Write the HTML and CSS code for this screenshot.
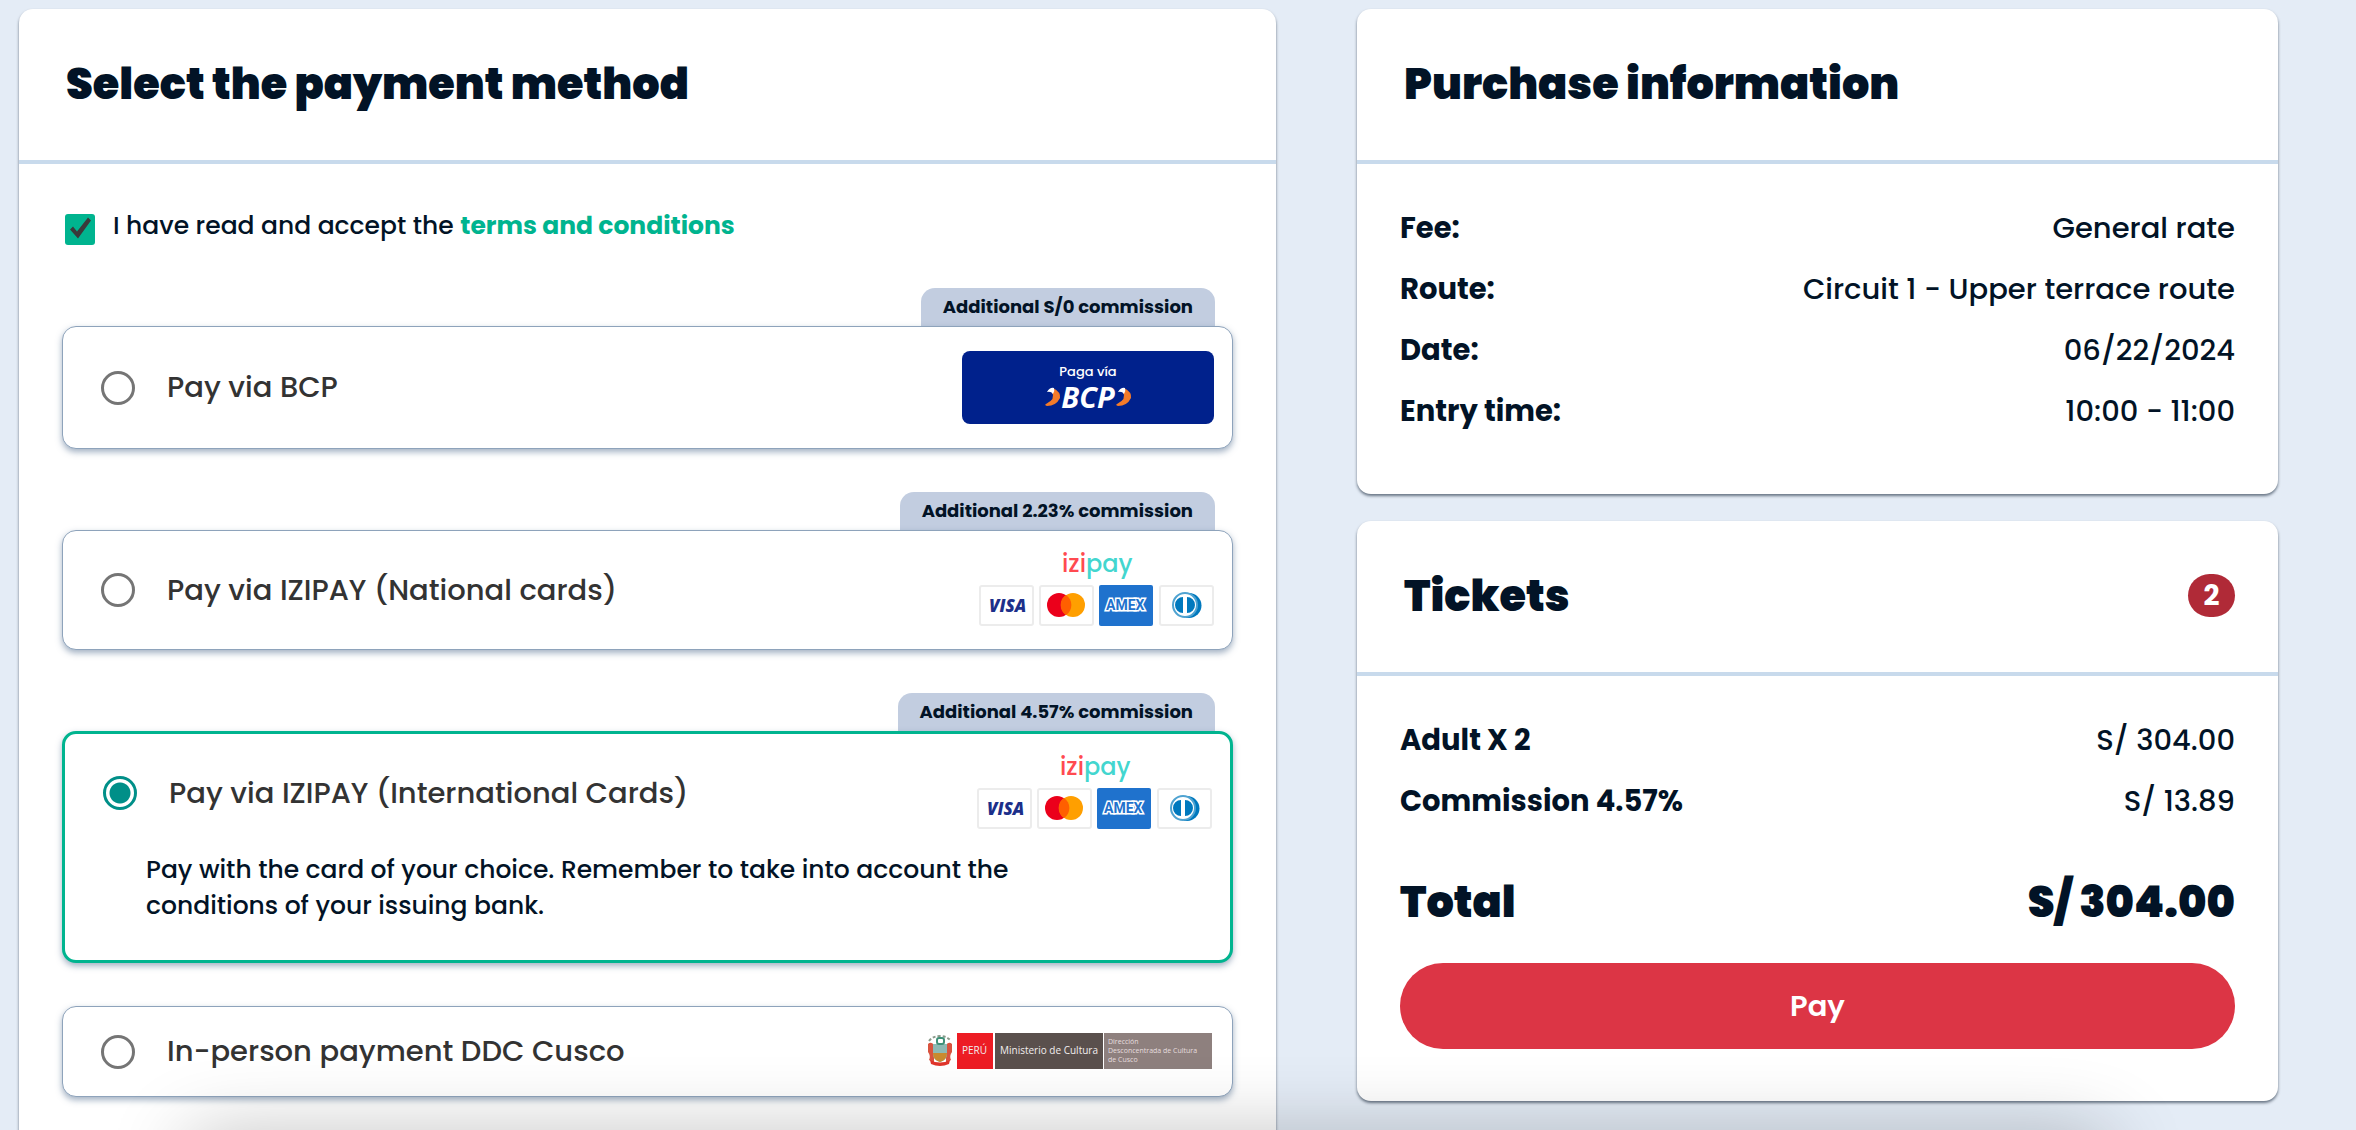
FILE: index.html
```html
<!DOCTYPE html>
<html lang="en">
<head>
    <meta charset="UTF-8">
    <meta name="viewport" content="width=device-width, initial-scale=1.0">
    <title>Payment</title>
    <link rel="stylesheet" href="styles.css">
</head>
<body>
    <main class="checkout">
        <section class="card methods">
            <header class="card-header">
                <h1>Select the payment method</h1>
            </header>
            <form class="card-body">
                <div class="terms">
                    <input type="checkbox" id="terms" checked>
                    <label for="terms">I have read and accept the <a href="#terms">terms and conditions</a></label>
                </div>

                <div class="method">
                    <span class="commission">Additional S/0 commission</span>
                    <div class="option">
                        <div class="option-row bcp">
                            <input type="radio" name="method" id="bcp">
                            <label for="bcp">Pay via BCP</label>
                            <svg class="bcp-logo" width="252" height="73" viewBox="0 0 252 73">
                                <rect width="252" height="73" rx="8" fill="#00218c"/>
                                <text x="126" y="25" class="bcp-via">Paga vía</text>
                                <text x="126" y="57" class="bcp-name">BCP</text>
                                <g id="bcp-mark">
                                    <path d="M91 37q8 4 7 10q-4 8-13 8q-3-1-1-2q10-5 6-12z" fill="#f47b29"/>
                                    <path d="M85 41q3-5 7-4q1 3-1 6q-2-3-6-2z" fill="#fff"/>
                                </g>
                                <use href="#bcp-mark" x="71"/>
                            </svg>
                        </div>
                    </div>
                </div>

                <div class="method">
                    <span class="commission">Additional 2.23% commission</span>
                    <div class="option">
                        <div class="option-row">
                            <input type="radio" name="method" id="izipay-national">
                            <label for="izipay-national">Pay via IZIPAY (National cards)</label>
                            <svg class="brands" width="236" height="76" viewBox="0 0 236 76">
                                <text x="84" y="20" class="izi">izi<tspan class="izi-pay">pay</tspan></text>
                                <g class="brand-box">
                                    <rect x="2" y="34" width="53" height="39" rx="2"/>
                                    <rect x="62" y="34" width="53" height="39" rx="2"/>
                                    <rect x="182" y="34" width="53" height="39" rx="2"/>
                                </g>
                                <text x="11" y="60" class="visa">VISA</text>
                                <circle cx="81" cy="53" r="12" fill="#eb001b"/>
                                <circle cx="95" cy="53" r="12" fill="#ff9f00"/>
                                <path d="M88 43a12 12 0 0 1 0 20a12 12 0 0 1 0-20z" fill="#ff5f00"/>
                                <rect x="121" y="33" width="54" height="41" rx="2" fill="#1f72cd"/>
                                <text x="128" y="58" class="amex">AMEX</text>
                                <path d="M208 41h3a12 12 0 0 1 0 25h-3z" fill="#0079be"/>
                                <circle cx="207" cy="53" r="12" fill="#fff" stroke="#4fa3d1" stroke-width="2"/>
                                <path d="M205 45a8 8 0 0 0 0 16zM209 45a8 8 0 0 1 0 16z" fill="#0079be"/>
                            </svg>
                        </div>
                    </div>
                </div>

                <div class="method">
                    <span class="commission">Additional 4.57% commission</span>
                    <div class="option selected">
                        <div class="option-row">
                            <input type="radio" name="method" id="izipay-international" checked>
                            <label for="izipay-international">Pay via IZIPAY (International Cards)</label>
                            <svg class="brands" width="236" height="76" viewBox="0 0 236 76">
                                <text x="84" y="20" class="izi">izi<tspan class="izi-pay">pay</tspan></text>
                                <g class="brand-box">
                                    <rect x="2" y="34" width="53" height="39" rx="2"/>
                                    <rect x="62" y="34" width="53" height="39" rx="2"/>
                                    <rect x="182" y="34" width="53" height="39" rx="2"/>
                                </g>
                                <text x="11" y="60" class="visa">VISA</text>
                                <circle cx="81" cy="53" r="12" fill="#eb001b"/>
                                <circle cx="95" cy="53" r="12" fill="#ff9f00"/>
                                <path d="M88 43a12 12 0 0 1 0 20a12 12 0 0 1 0-20z" fill="#ff5f00"/>
                                <rect x="121" y="33" width="54" height="41" rx="2" fill="#1f72cd"/>
                                <text x="128" y="58" class="amex">AMEX</text>
                                <path d="M208 41h3a12 12 0 0 1 0 25h-3z" fill="#0079be"/>
                                <circle cx="207" cy="53" r="12" fill="#fff" stroke="#4fa3d1" stroke-width="2"/>
                                <path d="M205 45a8 8 0 0 0 0 16zM209 45a8 8 0 0 1 0 16z" fill="#0079be"/>
                            </svg>
                        </div>
                        <p class="option-info">Pay with the card of your choice. Remember to take into account the conditions of your issuing bank.</p>
                    </div>
                </div>

                <div class="method">
                    <div class="option">
                        <div class="option-row compact">
                            <input type="radio" name="method" id="ddc">
                            <label for="ddc">In-person payment DDC Cusco</label>
                            <svg class="ddc-logo" width="288" height="37" viewBox="0 0 288 37">
                                <path d="M3 8q4-5 11-5t11 5" fill="none" stroke="#8a9a8a" stroke-width="2" stroke-dasharray="3 2"/>
                                <path d="M2 11q3-3 6 1v18l-5-3q2-4-1-8zM26 11q-3-3-6 1v18l5-3q-2-4 1-8z" fill="#d9533f"/>
                                <path d="M7 11h14v10q0 6-7 8q-7-2-7-8z" fill="#8db9b4"/>
                                <path d="M7 20h14q0 7-7 9q-7-2-7-9z" fill="#c98a2e"/>
                                <rect x="11" y="5" width="7" height="6" rx="2" fill="#fff" stroke="#3f9178" stroke-width="2"/>
                                <path d="M4 27q10 5 20 0l-1 4q-9 4-18 0z" fill="#e0352b"/>
                                <rect x="31" y="0" width="36" height="36" fill="#ed1c24"/>
                                <rect x="69" y="0" width="108" height="36" fill="#5a504d"/>
                                <rect x="178" y="0" width="108" height="36" fill="#8e807e"/>
                                <text x="36" y="21" class="ddc-text">PERÚ</text>
                                <text x="74" y="21" class="ddc-text">Ministerio de Cultura</text>
                                <text class="ddc-small"><tspan x="182" y="11">Dirección</tspan><tspan x="182" y="20">Desconcentrada de Cultura</tspan><tspan x="182" y="29">de Cusco</tspan></text>
                            </svg>
                        </div>
                    </div>
                </div>
            </form>
        </section>

        <aside class="summary">
            <section class="card">
                <header class="card-header">
                    <h2>Purchase information</h2>
                </header>
                <dl class="rows info">
                    <div><dt>Fee:</dt><dd>General rate</dd></div>
                    <div><dt>Route:</dt><dd>Circuit 1 - Upper terrace route</dd></div>
                    <div><dt>Date:</dt><dd>06/22/2024</dd></div>
                    <div><dt>Entry time:</dt><dd>10:00 - 11:00</dd></div>
                </dl>
            </section>

            <section class="card">
                <header class="card-header">
                    <h2>Tickets</h2>
                    <span class="count">2</span>
                </header>
                <dl class="rows">
                    <div><dt>Adult X 2</dt><dd>S/ 304.00</dd></div>
                    <div><dt>Commission 4.57%</dt><dd>S/ 13.89</dd></div>
                    <div class="total"><dt>Total</dt><dd>S/ 304.00</dd></div>
                </dl>
                <button type="button" class="pay">Pay</button>
            </section>
        </aside>
    </main>
    <div class="bottom-shade"></div>
</body>
</html>
```

FILE: styles.css
```css
* {
    box-sizing: border-box;
}

html, body {
    height: 100%;
}

body {
    margin: 0;
    overflow: hidden;
    background: #e4ecf6;
    color: #021326;
    font-family: Poppins, Inter, sans-serif;
    font-size: 25px;
    line-height: 36px;
}

h1, h2, p, dl, dd {
    margin: 0;
}

.checkout {
    display: grid;
    grid-template-columns: 1257fr 921fr;
    gap: 81px;
    min-height: 100%;
    padding: 9px 78px 0 19px;
}

.card {
    background: #fff;
    border-radius: 14px;
    box-shadow: 0 2px 3px rgba(2, 19, 38, 0.55);
}

.methods {
    border-radius: 14px 14px 0 0;
}

.card-header {
    display: flex;
    align-items: center;
    justify-content: space-between;
    height: 155px;
    padding: 0 43px 2px 47px;
    border-bottom: 4px solid #c8daec;
}

h1, h2 {
    font-size: 43px;
    font-weight: 900;
    line-height: 60px;
}

/* payment methods */
.card-body {
    padding: 40px 43px 60px;
}

.terms {
    display: flex;
    align-items: center;
    gap: 18px;
    height: 44px;
    padding-left: 3px;
    font-weight: 500;
}

.terms a {
    color: #00b48f;
    font-weight: 700;
    text-decoration: none;
}

.terms input {
    appearance: none;
    width: 30px;
    height: 31px;
    margin: 6px 0 0;
    border-radius: 3px;
    background: #00b48f;
}

.terms input:checked::after {
    content: "";
    display: block;
    width: 30px;
    height: 31px;
    background: #3a3a3a;
    clip-path: polygon(5px 16px, 8px 13px, 12px 18px, 23px 4px, 26px 7px, 13px 25px);
}

.method {
    display: flex;
    flex-direction: column;
    margin-top: 43px;
}

.terms + .method {
    margin-top: 40px;
}

.commission {
    align-self: flex-end;
    height: 38px;
    margin-right: 18px;
    padding: 0 22px;
    border-radius: 14px 14px 0 0;
    background: #c2cde0;
    font-size: 18px;
    font-weight: 700;
    line-height: 38px;
}

.option {
    border: 1px solid #8ea3bb;
    border-radius: 14px;
    background: #fff;
    box-shadow: 0 3px 6px rgba(70, 100, 135, 0.5);
}

.option.selected {
    border: 3px solid #00b48f;
}

.option-row {
    display: flex;
    align-items: center;
    gap: 32px;
    min-height: 118px;
    padding: 0 18px 0 38px;
}

.option-row.bcp {
    min-height: 121px;
}

.option-row.compact {
    min-height: 89px;
}

.option-row label {
    flex: 1;
    color: #333;
    font-size: 29px;
    font-weight: 500;
    line-height: 45px;
}

.option-row input {
    appearance: none;
    flex: none;
    width: 34px;
    height: 34px;
    margin: 0;
    border: 3px solid #757575;
    border-radius: 50%;
    background: #fff;
}

.option-row input:checked {
    border-color: #008f88;
    background: radial-gradient(circle, #008f88 10px, #fff 11px);
}

.option-info {
    max-width: 1000px;
    padding: 0 20px 36px 81px;
    font-weight: 500;
}

/* logos */
.brands {
    overflow: visible;
}

.izi {
    fill: #ff4a50;
    font: 500 24px Poppins, Lato, sans-serif;
}

.izi-pay {
    fill: #43d6cf;
}

.brand-box {
    fill: #fff;
    stroke: #ececec;
    stroke-width: 2px;
}

.visa {
    fill: #1c2f8a;
    font: italic 800 17px "Open Sans", sans-serif;
}

.amex {
    fill: #1f72cd;
    stroke: #fff;
    stroke-width: 3px;
    paint-order: stroke;
    font: 700 14px Roboto, sans-serif;
}

.bcp-via {
    fill: #fff;
    font: 500 13px Poppins, Inter, sans-serif;
    text-anchor: middle;
}

.bcp-name {
    fill: #fff;
    font: italic 700 29px "Open Sans", sans-serif;
    text-anchor: middle;
}

.ddc-text {
    fill: #f2eeee;
    font: 10px "Open Sans", sans-serif;
}

.ddc-small {
    fill: #e6dede;
    font: 7px "Open Sans", sans-serif;
}

/* purchase summary */
.summary {
    display: flex;
    flex-direction: column;
    gap: 27px;
}

.rows {
    padding: 42px 43px 0;
    font-size: 29px;
    line-height: 45px;
}

.rows.info {
    padding-bottom: 44px;
}

.rows div {
    display: flex;
    justify-content: space-between;
    margin-bottom: 16px;
}

.rows dt {
    font-weight: 700;
}

.rows dd {
    font-weight: 500;
}

.rows .total {
    margin: 48px 0 0;
    font-size: 43px;
    line-height: 60px;
}

.rows .total dt, .rows .total dd {
    font-weight: 900;
}

.count {
    min-width: 47px;
    border-radius: 22px;
    background: #b02a37;
    color: #fff;
    font-size: 28px;
    font-weight: 700;
    line-height: 43px;
    text-align: center;
}

.pay {
    display: block;
    width: calc(100% - 86px);
    height: 86px;
    margin: 31px 43px 52px;
    border: 0;
    border-radius: 43px;
    background: #dc3545;
    color: #fff;
    font: 600 29px Poppins, Inter, sans-serif;
    cursor: pointer;
}

/* shade that rises from below the window */
.bottom-shade {
    position: fixed;
    left: 190px;
    right: 250px;
    top: 100%;
    height: 60px;
    box-shadow: 0 10px 80px rgba(0, 0, 0, 0.3);
    pointer-events: none;
}
```
